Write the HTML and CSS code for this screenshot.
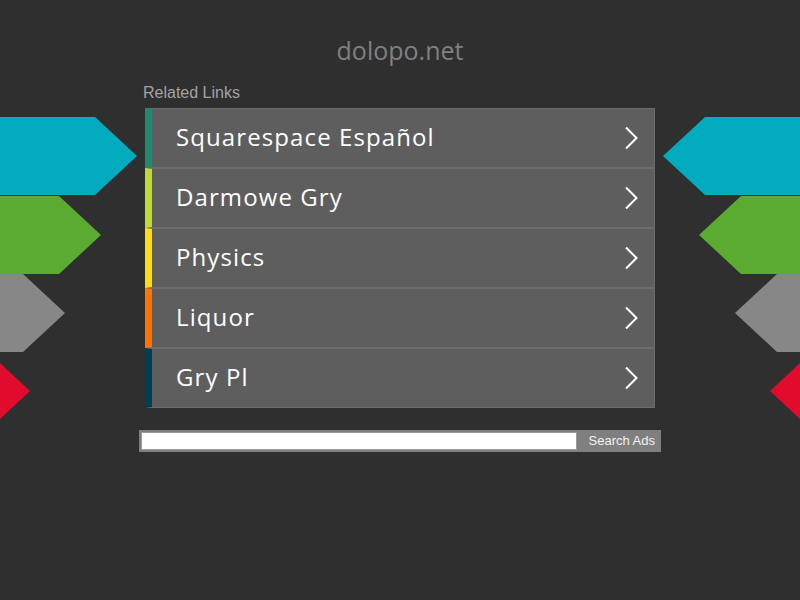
FILE: index.html
```html
<!DOCTYPE html>
<html>
<head>
<meta charset="utf-8">
<link rel="stylesheet" href="styles.css">
</head>
<body>
<div class="deco">
  <div class="arrow left cyan"></div>
  <div class="arrow left green"></div>
  <div class="arrow left gray"></div>
  <div class="arrow left red"></div>
  <div class="arrow right cyan"></div>
  <div class="arrow right green"></div>
  <div class="arrow right gray"></div>
  <div class="arrow right red"></div>
</div>
<main class="page">
  <h1 class="domain">dolopo.net</h1>
  <section class="links">
    <div class="links-title">Related Links</div>
    <ul class="list">
      <li class="item c1"><span class="label">Squarespace Español</span><svg class="chev" viewBox="0 0 14 24" width="14" height="24"><path d="M2 1.5 L12.5 12 L2 22.5" fill="none" stroke="#fff" stroke-width="2"/></svg></li>
      <li class="item c2"><span class="label">Darmowe Gry</span><svg class="chev" viewBox="0 0 14 24" width="14" height="24"><path d="M2 1.5 L12.5 12 L2 22.5" fill="none" stroke="#fff" stroke-width="2"/></svg></li>
      <li class="item c3"><span class="label">Physics</span><svg class="chev" viewBox="0 0 14 24" width="14" height="24"><path d="M2 1.5 L12.5 12 L2 22.5" fill="none" stroke="#fff" stroke-width="2"/></svg></li>
      <li class="item c4"><span class="label">Liquor</span><svg class="chev" viewBox="0 0 14 24" width="14" height="24"><path d="M2 1.5 L12.5 12 L2 22.5" fill="none" stroke="#fff" stroke-width="2"/></svg></li>
      <li class="item c5"><span class="label">Gry Pl</span><svg class="chev" viewBox="0 0 14 24" width="14" height="24"><path d="M2 1.5 L12.5 12 L2 22.5" fill="none" stroke="#fff" stroke-width="2"/></svg></li>
    </ul>
  </section>
  <form class="search">
    <input class="search-input" type="text">
    <button class="search-btn" type="button">Search Ads</button>
  </form>
</main>
</body>
</html>
```
FILE: styles.css
```css
html, body {
  margin: 0;
  padding: 0;
  background: #2f2f2f;
  width: 800px;
  height: 600px;
  overflow: hidden;
}
body {
  position: relative;
  font-family: "Liberation Sans", Arial, sans-serif;
}
.deco {
  position: absolute;
  inset: 0;
  overflow: hidden;
  pointer-events: none;
}
.arrow {
  position: absolute;
  height: 78px;
}
.arrow.left { left: 0; }
.arrow.left.cyan { top: 117px; width: 137px; }
.arrow.left.green { top: 196px; width: 101px; }
.arrow.left.gray { top: 274px; width: 65px; }
.arrow.left.red { top: 352px; width: 30px; }
.arrow.left.cyan,
.arrow.left.green,
.arrow.left.gray {
  clip-path: polygon(0 0, calc(100% - 42px) 0, 100% 50%, calc(100% - 42px) 100%, 0 100%);
}
.arrow.left.red {
  clip-path: polygon(0 11px, 100% 50%, 0 67px);
}
.arrow.right { right: 0; }
.arrow.right.cyan { top: 117px; width: 137px; }
.arrow.right.green { top: 196px; width: 101px; }
.arrow.right.gray { top: 274px; width: 65px; }
.arrow.right.red { top: 352px; width: 30px; }
.arrow.right.cyan,
.arrow.right.green,
.arrow.right.gray {
  clip-path: polygon(42px 0, 100% 0, 100% 100%, 42px 100%, 0 50%);
}
.arrow.right.red {
  clip-path: polygon(100% 11px, 0 50%, 100% 67px);
}
.cyan { background: #02abbe; }
.green { background: #5bab31; }
.gray { background: #878787; }
.red { background: #e00b2d; }

.page {
  position: relative;
  display: flex;
  flex-direction: column;
  align-items: center;
  padding-top: 34px;
}
.domain {
  margin: 0;
  font-family: "Open Sans", sans-serif;
  font-weight: 400;
  font-size: 25px;
  line-height: 32px;
  color: #808080;
}
.links {
  width: 512px;
  margin-top: 18px;
}
.links-title {
  font-size: 16px;
  line-height: 18px;
  color: #a3a3a3;
  margin-left: -1px;
  margin-bottom: 6px;
}
.list {
  list-style: none;
  margin: 0 0 0 1px;
  padding: 0;
  width: 510px;
}
.item {
  display: flex;
  align-items: center;
  justify-content: space-between;
  box-sizing: border-box;
  height: 60px;
  background: #5e5e5e;
  border: 1px solid #6c6c6c;
  border-left: 7px solid;
  padding: 0 16px 0 24px;
}
.c1 { border-left-color: #1e8a70; }
.c2 { border-left-color: #c1da33; }
.c3 { border-left-color: #ffdc14; }
.c4 { border-left-color: #ff7400; }
.c5 { border-left-color: #003e52; }
.label {
  font-family: "Open Sans", sans-serif;
  font-size: 24px;
  letter-spacing: 1.1px;
  color: #ffffff;
  white-space: nowrap;
  margin-bottom: 4px;
}
.chev {
  display: block;
}
.search {
  display: flex;
  margin-top: 22px;
  width: 522px;
  height: 22px;
  box-sizing: border-box;
  background: #7f7f7f;
  padding: 2px;
}
.search-input {
  flex: 1;
  margin: 0;
  height: 18px;
  box-sizing: border-box;
  border: 1px solid #9a9a9a;
  background: #ffffff;
  padding: 0;
}
.search-btn {
  margin: 0;
  border: 0;
  background: transparent;
  color: #f2f2f2;
  font-family: "Liberation Sans", Arial, sans-serif;
  font-size: 13px;
  padding: 0 4px 0 12px;
  height: 18px;
  line-height: 18px;
}
```
